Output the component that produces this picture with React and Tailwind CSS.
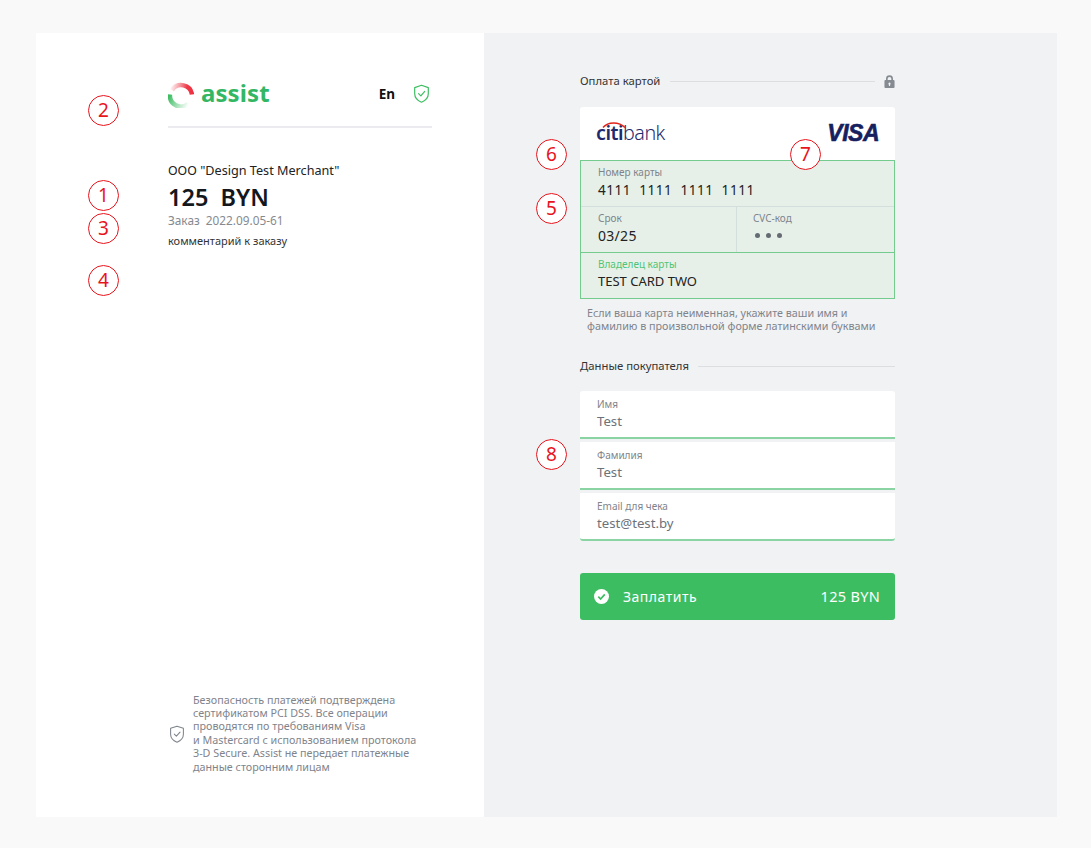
function Badge({ n, className }) {
  return (
    <div className={"absolute w-[31px] h-[31px] rounded-full border border-[#e8141c] bg-white flex items-center justify-center text-[19px] leading-none text-[#e8141c] " + className}>
      {n}
    </div>
  );
}
function Shield({ color, size = 20, w = 1.4 }) {
  return (
    <svg width={size} height={size * 1.15} viewBox="0 0 20 23" fill="none" stroke={color} strokeWidth={w} strokeLinejoin="round" strokeLinecap="round">
      <path d="M10 1.5 L18 4.2 V11.5 C18 16.2 14.5 19.6 10 21.5 C5.5 19.6 2 16.2 2 11.5 V4.2 Z" />
      <path d="M6.6 11.4 L9.2 14 L13.8 8.8" />
    </svg>
  );
}
function Field({ label, value, labelClass = "text-[#7f848c]", valueClass, className = "" }) {
  return (
    <div className={"pl-[17px] " + className}>
      <div className={"text-[10px] leading-[12px] " + labelClass}>{label}</div>
      <div className={valueClass}>{value}</div>
    </div>
  );
}
function Buyer({ label, value, extra = "" }) {
  return (
    <div className={"h-[48px] bg-white border-b-2 border-[#8ad4a3] pl-[17px] pt-[7px] " + extra}>
      <div className="text-[10px] leading-[13px] text-[#7f848c]">{label}</div>
      <div className="mt-px text-[13.2px] leading-[18px] text-[#6c727a]">{value}</div>
    </div>
  );
}
export default function App() {
  return (
    <div className="relative w-[1091px] h-[848px] bg-[#f9f9f9] pt-[33px] pl-[36px] font-['Noto_Sans',sans-serif] overflow-hidden">
      <div className="flex w-[1021px] h-[784px]">
        <div className="w-[448px] bg-white pl-[132px] pr-[52px] flex flex-col">
          <div className="mt-[47px] h-[48px] border-b-2 border-[#ebebf0] flex justify-between items-start">
            <div className="flex items-start">
              <svg width="26" height="26" viewBox="0 0 26 26" className="mt-[2px]" fill="none">
                <defs>
                  <linearGradient id="r" x1="2" y1="4" x2="25" y2="10" gradientUnits="userSpaceOnUse">
                    <stop offset="0" stopColor="#f05a64" stopOpacity="0" />
                    <stop offset="0.7" stopColor="#ee3b49" />
                    <stop offset="1" stopColor="#ee2f3f" />
                  </linearGradient>
                  <linearGradient id="g" x1="1" y1="14" x2="20" y2="24" gradientUnits="userSpaceOnUse">
                    <stop offset="0" stopColor="#3dbd62" />
                    <stop offset="1" stopColor="#3dbd62" stopOpacity="0" />
                  </linearGradient>
                </defs>
                <path d="M4 8 A11 11 0 0 1 24 12.5" stroke="url(#r)" strokeWidth="4.5" />
                <path d="M2 12.5 A11 11 0 0 0 20 22" stroke="url(#g)" strokeWidth="4.5" />
              </svg>
              <span className="ml-[7px] -mt-[4px] text-[24px] leading-[34px] font-bold text-[#34b765] tracking-[0.1px]">assist</span>
            </div>
            <div className="flex items-start pt-[5px]">
              <span className="text-[13.5px] leading-[18px] font-bold text-[#111]">En</span>
              <span className="ml-[18px] -mt-[1px] mr-[2px]"><Shield color="#3dbd62" size={17} /></span>
            </div>
          </div>
          <div className="mt-[33px] text-[12.65px] leading-[18px] text-[#222] whitespace-nowrap">ООО "Design Test Merchant"</div>
          <div className="mt-[3px] text-[23.5px] leading-[30px] font-semibold text-[#14171c] whitespace-pre">125  BYN</div>
          <div className="text-[11.8px] leading-[16px] text-[#858a91] whitespace-pre">Заказ  2022.09.05-61</div>
          <div className="mt-[5px] text-[11px] leading-[16px] text-[#333]">комментарий к заказу</div>
          <div className="mt-auto mb-[43px] flex items-center">
            <span className="ml-px shrink-0"><Shield color="#7f848c" size={16} w={1.3} /></span>
            <div className="ml-[8px] w-[232px] text-[10.75px] leading-[13.4px] text-[#7f848c] whitespace-nowrap">
              Безопасность платежей подтверждена<br />
              сертификатом PCI DSS. Все операции<br />
              проводятся по требованиям Visa<br />
              и Mastercard с использованием протокола<br />
              3-D Secure. Assist не передает платежные<br />
              данные сторонним лицам
            </div>
          </div>
        </div>
        <div className="flex-1 bg-[#f1f2f4] pl-[96px]">
          <div className="w-[315px]">
            <div className="mt-[39px] h-[18px] flex items-center">
              <span className="text-[11.3px] leading-[18px] text-[#333] whitespace-nowrap">Оплата картой</span>
              <span className="ml-[10px] flex-1 h-px bg-[#dcdee2]" />
              <svg className="ml-[9px]" width="11" height="13" viewBox="0 0 12 14" fill="#868b92">
                <path fillRule="evenodd" d="M2.2 5.4V4a3.8 3.8 0 0 1 7.6 0v1.4h.7c.6 0 1 .4 1 1V13c0 .6-.4 1-1 1h-9c-.6 0-1-.4-1-1V6.4c0-.6.4-1 1-1zM4 5.4h4V4a2 2 0 0 0-4 0zM6 8.2a1.3 1.3 0 0 0-.6 2.4v1.2h1.2v-1.2A1.3 1.3 0 0 0 6 8.2z" />
              </svg>
            </div>
            <div className="mt-[17px] h-[53px] bg-white rounded-t-[3px] flex items-start justify-between pl-[16px] pr-[16px]">
              <div className="relative mt-[13px] text-[19.7px] leading-[26px] text-[#1f2a6e] tracking-[-0.5px]">
                <span className="font-semibold">citi</span><span className="font-light">bank</span>
                <svg className="absolute left-[6px] top-[1px]" width="24" height="7" viewBox="0 0 24 7" fill="none">
                  <path d="M1 6.5 C6 0.5 17 0.5 23 6.5" stroke="#e2231a" strokeWidth="1.5" />
                </svg>
              </div>
              <div className="mt-[12px] text-[23px] leading-[28px] font-bold italic text-[#16205f] tracking-[-0.5px] [-webkit-text-stroke:0.6px_#16205f] font-['Liberation_Sans',sans-serif]">VISA</div>
            </div>
            <div className="bg-[#e6f0e8] border border-[#73cc8e]">
              <Field label="Номер карты" labelClass="text-[#7f848c] pt-[5px]" valueClass="mt-[2px] h-[26px] text-[13.5px] leading-[20px] text-[#222] whitespace-pre tracking-[0.55px]" value="4111  1111  1111  1111" />
              <div className="flex h-[46px] border-t border-[#d3dfdc]">
                <Field className="w-[156px] pt-[5px] border-r border-[#d3dfdc]" label="Срок" valueClass="mt-[2px] text-[14px] leading-[20px] text-[#222] tracking-[0.3px]" value="03/25" />
                <div className="pl-[16px] pt-[5px]">
                  <div className="text-[10px] leading-[12px] text-[#7f848c]">CVC-код</div>
                  <div className="mt-[9px] flex gap-[6px] pl-[2px]">
                    <span className="w-[5px] h-[5px] rounded-full bg-[#666b73]" />
                    <span className="w-[5px] h-[5px] rounded-full bg-[#666b73]" />
                    <span className="w-[5px] h-[5px] rounded-full bg-[#666b73]" />
                  </div>
                </div>
              </div>
              <Field className="h-[46px] pt-[5px] border-t border-[#73cc8e]" label="Владелец карты" labelClass="text-[#4fc477]" valueClass="mt-px text-[13px] leading-[20px] text-[#222]" value="TEST CARD TWO" />
            </div>
            <div className="mt-[8px] pl-[7px] text-[10.75px] leading-[13px] text-[#7f848c] whitespace-nowrap">
              Если ваша карта неименная, укажите ваши имя и<br />
              фамилию в произвольной форме латинскими буквами
            </div>
            <div className="mt-[24px] h-[18px] flex items-center">
              <span className="text-[11.3px] leading-[18px] text-[#333] whitespace-nowrap">Данные покупателя</span>
              <span className="ml-[9px] flex-1 h-px bg-[#dcdee2]" />
            </div>
            <div className="mt-[16px] flex flex-col gap-[3px]">
              <Buyer label="Имя" value="Test" extra="rounded-t-[3px]" />
              <Buyer label="Фамилия" value="Test" />
              <Buyer label="Email для чека" value="test@test.by" extra="rounded-b-[3px]" />
            </div>
            <div className="mt-[32px] h-[47px] bg-[#3dbd62] rounded-[3px] flex items-center pl-[14px] pr-[15px] text-white">
              <svg width="15" height="15" viewBox="0 0 15 15">
                <circle cx="7.5" cy="7.5" r="7.5" fill="#fff" />
                <path d="M4.3 7.7 L6.6 10 L10.8 5.4" fill="none" stroke="#3dbd62" strokeWidth="1.7" />
              </svg>
              <span className="ml-[14px] text-[14px] tracking-[0.5px]">Заплатить</span>
              <span className="ml-auto text-[14.5px] tracking-[0.3px]">125 BYN</span>
            </div>
          </div>
        </div>
      </div>
      <Badge n="1" className="left-[88px] top-[180px]" />
      <Badge n="2" className="left-[88px] top-[95px]" />
      <Badge n="3" className="left-[88px] top-[213px]" />
      <Badge n="4" className="left-[88px] top-[265px]" />
      <Badge n="5" className="left-[536px] top-[193px]" />
      <Badge n="6" className="left-[536px] top-[139px]" />
      <Badge n="7" className="left-[790px] top-[139px]" />
      <Badge n="8" className="left-[536px] top-[439px]" />
    </div>
  );
}
